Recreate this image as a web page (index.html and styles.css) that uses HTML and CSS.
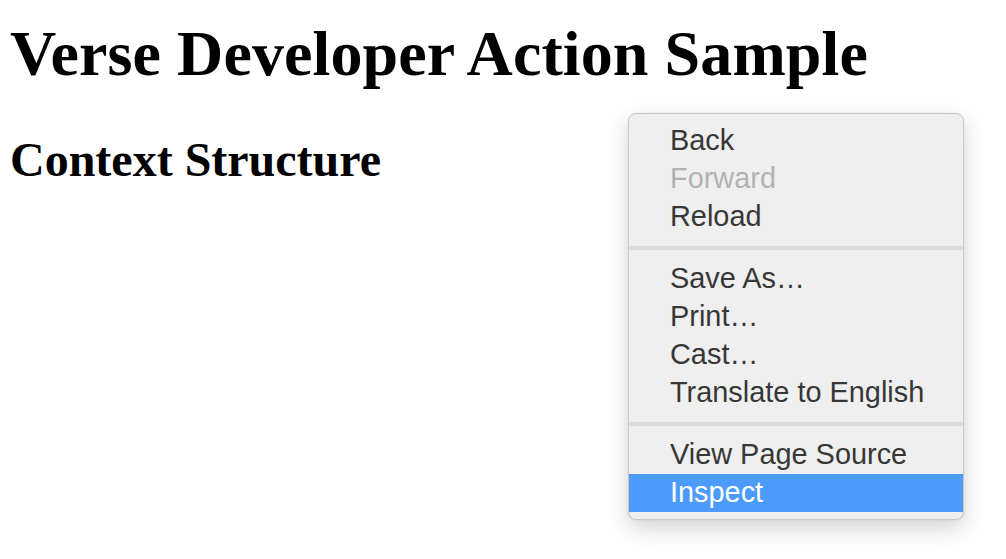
FILE: index.html
```html
<!DOCTYPE html>
<html lang="en">
<head>
<meta charset="utf-8">
<title>Verse Developer Action Sample</title>
<link rel="stylesheet" href="styles.css">
</head>
<body>
  <h1 class="title">Verse Developer Action Sample</h1>
  <h2 class="subtitle">Context Structure</h2>

  <div class="context-menu">
    <div class="menu-item">Back</div>
    <div class="menu-item disabled">Forward</div>
    <div class="menu-item">Reload</div>
    <div class="menu-sep"></div>
    <div class="menu-item">Save As…</div>
    <div class="menu-item">Print…</div>
    <div class="menu-item">Cast…</div>
    <div class="menu-item">Translate to English</div>
    <div class="menu-sep"></div>
    <div class="menu-item">View Page Source</div>
    <div class="menu-item active">Inspect</div>
  </div>
</body>
</html>
```

FILE: styles.css
```css
html, body {
  margin: 0;
  background: #ffffff;
}

body {
  padding: 17px 10px;
  font-family: "Liberation Serif", "Times New Roman", serif;
  color: #000;
}

.title {
  margin: 0 0 41px;
  font-size: 64px;
  line-height: 74px;
  font-weight: bold;
  letter-spacing: 0.1px;
}

.subtitle {
  margin: 0;
  font-size: 48px;
  line-height: 56px;
  font-weight: bold;
}

.context-menu {
  position: absolute;
  left: 628px;
  top: 113px;
  width: 334px;
  padding: 8px 0 7px;
  background: #efefef;
  border: 1px solid #c9c9c9;
  border-radius: 8px;
  box-shadow: 0 8px 22px rgba(0, 0, 0, 0.18), 0 0 2px rgba(0, 0, 0, 0.08);
  font-family: "Liberation Sans", Arial, sans-serif;
  font-size: 28.9px;
  color: #373737;
}

.menu-item {
  height: 36px;
  line-height: 36px;
  padding: 0 0 2px 41px;
  white-space: nowrap;
}

.menu-item.disabled {
  color: #b2b2b2;
}

.menu-item.active {
  background: #4c9bfa;
  color: #ffffff;
}

.menu-sep {
  height: 4px;
  margin: 10px 0;
  background: #dddddd;
}
```
